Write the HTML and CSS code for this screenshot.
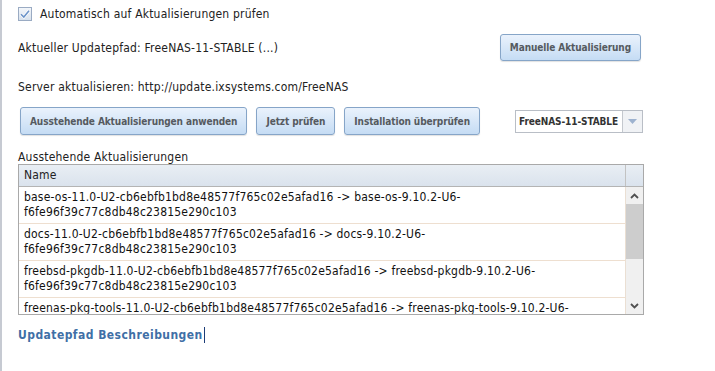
FILE: index.html
```html
<!doctype html>
<html lang="de">

<head>
    <meta charset="UTF-8">
    <title>Aktualisierung</title>
    <link rel="stylesheet" href="styles.css">
</head>

<body>
    <section class="update">
        <label class="update--auto">
            <span class="checkbox">
                <svg width="14" height="14" viewBox="0 0 14 14">
                    <defs>
                        <linearGradient id="cbg" x1="0" y1="0" x2="0" y2="1">
                            <stop offset="0" stop-color="#f4f7fb"/>
                            <stop offset="1" stop-color="#d6e0ec"/>
                        </linearGradient>
                    </defs>
                    <rect x="0.5" y="0.5" width="13" height="13" fill="url(#cbg)" stroke="#9aabc3"/>
                    <path d="M3 7.2 L5.8 10 L11 3.8" fill="none" stroke="#ffffff" stroke-width="3"/>
                    <path d="M3 7.2 L5.8 10 L11 3.8" fill="none" stroke="#6b93c9" stroke-width="1.6"/>
                </svg>
            </span>
            Automatisch auf Aktualisierungen prüfen
        </label>

        <div class="update--row">
            <span>Aktueller Updatepfad: FreeNAS-11-STABLE (...)</span>
            <button class="btn btn--manual">Manuelle Aktualisierung</button>
        </div>

        <div class="update--server">Server aktualisieren: http://update.ixsystems.com/FreeNAS</div>

        <div class="update--actions">
            <button class="btn">Ausstehende Aktualisierungen anwenden</button>
            <button class="btn">Jetzt prüfen</button>
            <button class="btn">Installation überprüfen</button>
            <div class="select">
                <span class="select--value">FreeNAS-11-STABLE</span>
                <span class="select--arrow">
                    <svg width="9" height="5" viewBox="0 0 9 5"><path d="M0 0 H9 L4.5 5 Z" fill="#9db2cf"/></svg>
                </span>
            </div>
        </div>

        <div class="grid--title">Ausstehende Aktualisierungen</div>
        <div class="grid">
            <div class="grid--header">
                <div class="grid--name">Name</div>
                <div class="grid--corner"></div>
            </div>
            <div class="grid--body">
                <div class="grid--rows">
                    <div class="grid--row">base-os-11.0-U2-cb6ebfb1bd8e48577f765c02e5afad16 -&gt; base-os-9.10.2-U6-f6fe96f39c77c8db48c23815e290c103</div>
                    <div class="grid--row">docs-11.0-U2-cb6ebfb1bd8e48577f765c02e5afad16 -&gt; docs-9.10.2-U6-f6fe96f39c77c8db48c23815e290c103</div>
                    <div class="grid--row">freebsd-pkgdb-11.0-U2-cb6ebfb1bd8e48577f765c02e5afad16 -&gt; freebsd-pkgdb-9.10.2-U6-f6fe96f39c77c8db48c23815e290c103</div>
                    <div class="grid--row">freenas-pkg-tools-11.0-U2-cb6ebfb1bd8e48577f765c02e5afad16 -&gt; freenas-pkg-tools-9.10.2-U6-f6fe96f39c77c8db48c23815e290c103</div>
                </div>
                <div class="scrollbar">
                    <div class="scrollbar--btn">
                        <svg width="9" height="6" viewBox="0 0 9 6"><path d="M1 5 L4.5 1.5 L8 5" fill="none" stroke="#505050" stroke-width="1.8"/></svg>
                    </div>
                    <div class="scrollbar--track"><div class="scrollbar--thumb"></div></div>
                    <div class="scrollbar--btn">
                        <svg width="9" height="6" viewBox="0 0 9 6"><path d="M1 1 L4.5 4.5 L8 1" fill="none" stroke="#505050" stroke-width="1.8"/></svg>
                    </div>
                </div>
            </div>
        </div>

        <div class="update--footer">
            <a class="update--link" href="#">Updatepfad Beschreibungen</a><span class="caret"></span>
        </div>
    </section>
</body>

</html>
```

FILE: styles.css
```css
body {
    margin: 0;
    background: #ffffff;
    font-family: "DejaVu Sans Condensed", "DejaVu Sans", sans-serif;
    font-size: 12px;
    letter-spacing: 0.2px;
    color: #222222;
}

.update {
    box-sizing: border-box;
    width: 644px;
    min-height: 371px;
    padding: 7px 0 0 16px;
    border-left: 2px solid #c6cad2;
}

.update--auto {
    display: flex;
    align-items: center;
    gap: 8px;
    height: 14px;
}

.checkbox {
    display: block;
    width: 14px;
    height: 14px;
}

.checkbox svg {
    display: block;
}

.update--row {
    display: flex;
    justify-content: space-between;
    align-items: center;
    margin-top: 13px;
    padding-right: 3px;
}

.update--server {
    margin-top: 19px;
    line-height: 14px;
}

.update--actions {
    display: flex;
    align-items: center;
    gap: 9px;
    margin-top: 13px;
    padding: 0 1px 0 2px;
}

.btn {
    flex-shrink: 0;
    height: 28px;
    padding: 0 9px;
    border: 1px solid #86a5c8;
    border-radius: 3px;
    background: linear-gradient(#eaf2fc, #c5dcf4);
    box-shadow: 0 1px 1px rgba(0, 0, 0, 0.12);
    font-family: "DejaVu Sans Condensed", "DejaVu Sans", sans-serif;
    font-size: 10px;
    font-weight: bold;
    letter-spacing: -0.1px;
    color: #555a60;
    white-space: nowrap;
    cursor: pointer;
}

.btn--manual {
    height: 27px;
}

.select {
    display: flex;
    flex-shrink: 0;
    margin-left: auto;
    height: 23px;
    border: 1px solid #b9bec6;
    box-sizing: border-box;
    width: 128px;
    background: #ffffff;
}

.select--value {
    flex: 1;
    padding-left: 3px;
    line-height: 21px;
    font-size: 10px;
    font-weight: bold;
    letter-spacing: -0.1px;
    color: #333333;
    white-space: nowrap;
    overflow: hidden;
}

.select--arrow {
    display: flex;
    align-items: center;
    justify-content: center;
    width: 19px;
    border-left: 1px solid #c4c8ce;
    background: #f0f2f5;
}

.grid--title {
    margin-top: 15px;
    line-height: 14px;
}

.grid {
    border: 1px solid #a9a9a9;
}

.grid--header {
    display: flex;
    height: 21px;
    border-bottom: 1px solid #b4b4b4;
    background: linear-gradient(#e9eef4, #dae3ed);
}

.grid--name {
    flex: 1;
    padding-left: 5px;
    line-height: 21px;
}

.grid--corner {
    width: 17px;
    border-left: 1px solid #c2c2c2;
}

.grid--body {
    display: flex;
    height: 127px;
    overflow: hidden;
}

.grid--rows {
    flex: 1;
    border-right: 1px solid #eadfd3;
}

.grid--row {
    padding: 3px 6px 3px 5px;
    line-height: 15px;
    border-bottom: 1px solid #eedfd0;
    color: #111111;
}

.scrollbar {
    display: flex;
    flex-direction: column;
    width: 17px;
    background: #f0f0f0;
}

.scrollbar--btn {
    display: flex;
    align-items: center;
    justify-content: center;
    height: 17px;
}

.scrollbar--track {
    flex: 1;
}

.scrollbar--thumb {
    height: 55px;
    background: #cdcdcd;
}

.update--footer {
    display: flex;
    align-items: center;
    margin-top: 12px;
}

.update--link {
    font-weight: bold;
    letter-spacing: 0.45px;
    color: #3f6fa6;
    text-decoration: none;
}

.caret {
    width: 1px;
    height: 16px;
    margin-left: 1px;
    background: #1c3d78;
}
```
